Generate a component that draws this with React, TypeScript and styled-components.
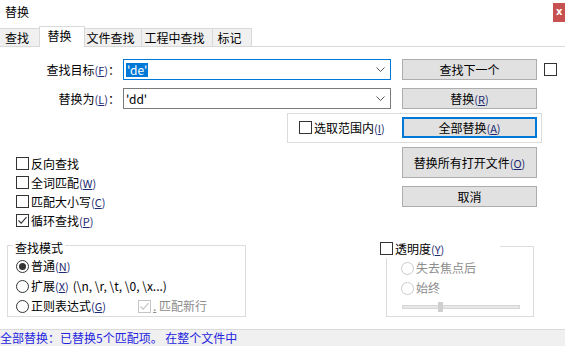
import React from "react";
import { styled, createGlobalStyle, css } from "styled-components";

const GlobalStyle = createGlobalStyle`
  html, body {
    margin: 0;
    padding: 0;
    background: #ffffff;
  }
  body {
    font-family: "Noto Sans CJK SC", "Noto Sans", sans-serif;
    font-size: 12px;
    color: #000000;
  }
`;

const Key = ({ k }: { k: string }) => (
  <KeyText>
    (<u>{k}</u>)
  </KeyText>
);

const CheckMark = () => (
  <svg width="11" height="11" viewBox="0 0 11 11">
    <path d="M1.5 5.5 L4.2 8.2 L9.5 2.2" fill="none" stroke="currentColor" strokeWidth="1.1" />
  </svg>
);

const Chevron = () => (
  <svg width="9" height="5" viewBox="0 0 9 5">
    <path d="M0.5 0.5 L4.5 4.5 L8.5 0.5" fill="none" stroke="#555" strokeWidth="1" />
  </svg>
);

type CheckProps = { checked?: boolean; disabled?: boolean; children?: React.ReactNode };

const Check = ({ checked, disabled, children }: CheckProps) => (
  <CheckLabel $disabled={disabled}>
    <CheckBox $disabled={disabled}>{checked && <CheckMark />}</CheckBox>
    {children}
  </CheckLabel>
);

const Radio = ({ on, disabled, children }: { on?: boolean; disabled?: boolean; children: React.ReactNode }) => (
  <RadioRow $disabled={disabled}>
    <RadioCircle $disabled={disabled}>{on && <RadioDot />}</RadioCircle>
    {children}
  </RadioRow>
);

const App = () => {
  return (
    <Window>
      <GlobalStyle />
      <TitleBar>
        <Title>替换</Title>
        <Close>x</Close>
      </TitleBar>

      <TabStrip>
        <Tab $w={40}>查找</Tab>
        <Tab $w={46} $active>替换</Tab>
        <Tab $w={58}>文件查找</Tab>
        <Tab $w={72}>工程中查找</Tab>
        <Tab $w={40}>标记</Tab>
      </TabStrip>

      <Body>
        <FieldRow>
          <FieldLabel>
            查找目标<Key k="F" />：
          </FieldLabel>
          <Combo $focused>
            <Selected>'de'</Selected>
            <Chevron />
          </Combo>
          <Button>查找下一个</Button>
          <LoneBox />
        </FieldRow>

        <FieldRow>
          <FieldLabel>
            替换为<Key k="L" />：
          </FieldLabel>
          <Combo>
            <span>'dd'</span>
            <Chevron />
          </Combo>
          <Button>
            替换<Key k="R" />
          </Button>
        </FieldRow>

        <ScopeBox>
          <Check>
            选取范围内<Key k="I" />
          </Check>
          <Button $focused>
            全部替换<Key k="A" />
          </Button>
        </ScopeBox>

        <Middle>
          <Options>
            <Check>反向查找</Check>
            <Check>
              全词匹配<Key k="W" />
            </Check>
            <Check>
              匹配大小写<Key k="C" />
            </Check>
            <Check checked>
              循环查找<Key k="P" />
            </Check>
          </Options>
          <SideButtons>
            <Button $h={31}>
              替换所有打开文件<Key k="O" />
            </Button>
            <Button>取消</Button>
          </SideButtons>
        </Middle>

        <Groups>
          <ModeGroup>
            <GroupLegend>查找模式</GroupLegend>
            <Radio on>
              普通<Key k="N" />
            </Radio>
            <Radio>
              扩展<Key k="X" />
              <Escapes>(\n, \r, \t, \0, \x...)</Escapes>
            </Radio>
            <Radio>
              正则表达式<Key k="G" />
              <NewlineOpt>
                <Check checked disabled>
                  <u>.</u>&nbsp;匹配新行
                </Check>
              </NewlineOpt>
            </Radio>
          </ModeGroup>

          <AlphaGroup>
            <AlphaLegend>
              <Check>
                透明度<Key k="Y" />
              </Check>
            </AlphaLegend>
            <Radio disabled>失去焦点后</Radio>
            <Radio disabled>始终</Radio>
            <SliderTrack>
              <SliderThumb />
            </SliderTrack>
          </AlphaGroup>
        </Groups>
      </Body>

      <StatusBar>全部替换：已替换5个匹配项。 在整个文件中</StatusBar>
    </Window>
  );
};

export default App;

const Window = styled.div`
  width: 565px;
  height: 346px;
  display: flex;
  flex-direction: column;
  overflow: hidden;
  background: #ffffff;
  line-height: 16px;
`;

const TitleBar = styled.div`
  height: 26px;
  display: flex;
  align-items: flex-start;
  justify-content: space-between;
  padding-left: 5px;
`;

const Title = styled.div`
  margin-top: 4px;
`;

const Close = styled.div`
  margin-top: 3px;
  width: 12px;
  height: 19px;
  background: #c75050;
  color: #ffffff;
  font-family: "DejaVu Sans", sans-serif;
  font-size: 10px;
  font-weight: bold;
  line-height: 17px;
  padding-left: 3px;
  box-sizing: border-box;
`;

const TabStrip = styled.div`
  height: 21px;
  box-sizing: border-box;
  display: flex;
  align-items: flex-end;
  border-bottom: 1px solid #d9d9d9;
`;

const Tab = styled.div<{ $w: number; $active?: boolean }>`
  width: ${(p) => p.$w}px;
  box-sizing: border-box;
  height: 18px;
  display: flex;
  align-items: center;
  justify-content: center;
  padding-right: 5px;
  background: #f0f0f0;
  border: 1px solid #d9d9d9;
  border-bottom: none;
  margin-left: -1px;
  &:first-child {
    margin-left: 0;
    border-left: none;
  }
  ${(p) =>
    p.$active &&
    css`
      height: 21px;
      margin-bottom: -1px;
      background: #ffffff;
      padding-bottom: 2px;
      position: relative;
    `}
`;

const Body = styled.div`
  flex: 1;
  display: flex;
  flex-direction: column;
  padding-top: 12px;
`;

const FieldRow = styled.div`
  display: flex;
  align-items: center;
  height: 21px;
  margin-bottom: 8px;
`;

const FieldLabel = styled.div`
  width: 120px;
  text-align: right;
  margin-right: 3px;
`;

const KeyText = styled.span`
  color: #1c2a70;
  font-size: 11px;
`;

const Combo = styled.div<{ $focused?: boolean }>`
  width: 268px;
  height: 21px;
  box-sizing: border-box;
  border: 1px solid ${(p) => (p.$focused ? "#0078d7" : "#7a7a7a")};
  display: flex;
  align-items: center;
  justify-content: space-between;
  padding: 0 5px 0 2px;
  margin-right: 11px;
`;

const Selected = styled.span`
  background: #0078d7;
  color: #ffffff;
  padding: 0 1px;
  line-height: 14px;
`;

const Button = styled.div<{ $focused?: boolean; $h?: number }>`
  width: 135px;
  height: ${(p) => p.$h ?? 21}px;
  box-sizing: border-box;
  background: #e1e1e1;
  border: ${(p) => (p.$focused ? "2px solid #0078d7" : "1px solid #adadad")};
  display: flex;
  align-items: center;
  justify-content: center;
  flex-shrink: 0;
`;

const LoneBox = styled.div`
  width: 13px;
  height: 13px;
  box-sizing: border-box;
  border: 1px solid #333333;
  margin-left: 7px;
`;

const ScopeBox = styled.div`
  margin-left: 287px;
  width: 255px;
  height: 30px;
  margin-top: -4px;
  box-sizing: border-box;
  border: 1px solid #dcdcdc;
  display: flex;
  align-items: center;
  justify-content: space-between;
  padding: 0 4px 1px 11px;
`;

const CheckLabel = styled.div<{ $disabled?: boolean }>`
  display: flex;
  align-items: center;
  height: 19px;
  color: ${(p) => (p.$disabled ? "#8c8c8c" : "#000000")};
  white-space: nowrap;
`;

const CheckBox = styled.span<{ $disabled?: boolean }>`
  width: 13px;
  height: 13px;
  box-sizing: border-box;
  border: 1px solid ${(p) => (p.$disabled ? "#c4c4c4" : "#333333")};
  background: #ffffff;
  color: ${(p) => (p.$disabled ? "#c4c4c4" : "#333333")};
  display: flex;
  align-items: center;
  justify-content: center;
  margin-right: 2px;
  flex-shrink: 0;
`;

const Middle = styled.div`
  display: flex;
  margin-top: 4px;
`;

const Options = styled.div`
  display: flex;
  flex-direction: column;
  padding: 7px 0 0 16px;
`;

const SideButtons = styled.div`
  margin-left: auto;
  margin-right: 28px;
  display: flex;
  flex-direction: column;
  gap: 8px;
`;

const Groups = styled.div`
  display: flex;
  margin-top: 4px;
`;

const groupBox = css`
  margin: 0;
  padding: 0;
  border: 1px solid #dcdcdc;
  box-sizing: border-box;
  min-width: 0;
`;

const ModeGroup = styled.fieldset`
  ${groupBox}
  margin-left: 7px;
  width: 239px;
  padding-left: 8px;
`;

const AlphaGroup = styled.fieldset`
  ${groupBox}
  margin-left: 140px;
  width: 148px;
  padding: 0 0 7px 14px;
`;

const GroupLegend = styled.legend`
  padding: 6px 2px 0 2px;
  margin-left: -3px;
  line-height: 16px;
`;

const AlphaLegend = styled.legend`
  padding: 5px 0 0 0;
  margin-left: -21px;
  width: 120px;
  background: #ffffff;
  line-height: 16px;
`;

const RadioRow = styled.div<{ $disabled?: boolean }>`
  display: flex;
  align-items: center;
  height: 20px;
  white-space: nowrap;
  color: ${(p) => (p.$disabled ? "#8c8c8c" : "#000000")};
`;

const RadioCircle = styled.span<{ $disabled?: boolean }>`
  width: 13px;
  height: 13px;
  box-sizing: border-box;
  border-radius: 50%;
  border: 1px solid ${(p) => (p.$disabled ? "#cccccc" : "#333333")};
  display: flex;
  align-items: center;
  justify-content: center;
  margin-right: 2px;
  flex-shrink: 0;
`;

const RadioDot = styled.span`
  width: 7px;
  height: 7px;
  border-radius: 50%;
  background: #333333;
`;

const Escapes = styled.span`
  margin-left: 4px;
  font-size: 12px;
`;

const NewlineOpt = styled.div`
  margin-left: 32px;
`;

const SliderTrack = styled.div`
  width: 118px;
  height: 4px;
  box-sizing: border-box;
  margin: 7px 0 0 1px;
  background: #e7e7e7;
  border: 1px solid #d6d6d6;
  display: flex;
  align-items: center;
`;

const SliderThumb = styled.div`
  width: 5px;
  height: 10px;
  margin-left: 35px;
  background: #cfcfcf;
`;

const StatusBar = styled.div`
  height: 17px;
  box-sizing: border-box;
  border-top: 1px solid #dadada;
  background: #f0f0f0;
  color: #2424e0;
  line-height: 16px;
  white-space: nowrap;
`;
